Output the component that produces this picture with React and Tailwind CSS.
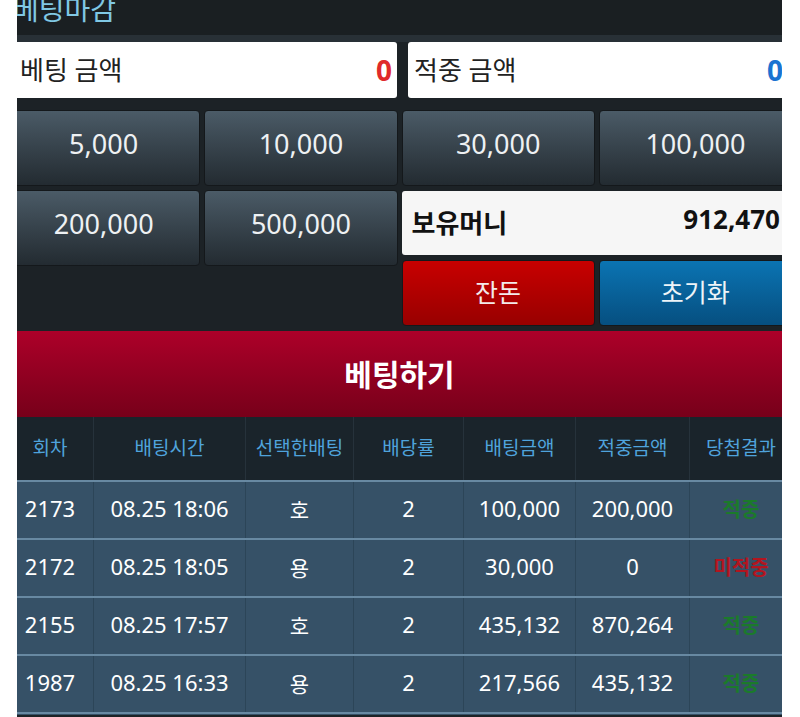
import React from 'react';

const chips = ['5,000', '10,000', '30,000', '100,000'];
const chips2 = ['200,000', '500,000'];

const headers = ['회차', '배팅시간', '선택한배팅', '배당률', '배팅금액', '적중금액', '당첨결과'];

const rows = [
  { round: '2173', time: '08.25 18:06', pick: '호', odds: '2', bet: '100,000', win: '200,000', result: '적중' },
  { round: '2172', time: '08.25 18:05', pick: '용', odds: '2', bet: '30,000', win: '0', result: '미적중' },
  { round: '2155', time: '08.25 17:57', pick: '호', odds: '2', bet: '435,132', win: '870,264', result: '적중' },
  { round: '1987', time: '08.25 16:33', pick: '용', odds: '2', bet: '217,566', win: '435,132', result: '적중' },
];

const font = { fontFamily: '"Noto Sans", "Noto Sans CJK KR", sans-serif' };

const ChipButton = ({ label }) => (
  <button
    type="button"
    className="flex h-[76px] w-full items-center justify-center rounded-[4px] border border-[#14181b] bg-gradient-to-b from-[#4b5b67] to-[#232b31] pb-[7px] text-[27px] text-[#eef1f3]"
  >
    {label}
  </button>
);

const cols = 'grid grid-cols-[86px_152px_108px_110px_112px_114px_103px]';

export default function App() {
  return (
    <div className="min-h-screen bg-white" style={font}>
      <div className="ml-[17px] h-[717px] w-[765px] overflow-hidden bg-[#1c2226]">
        <div className="ml-[-10px] w-[785px]">
          {/* title bar */}
          <div className="h-[35px] overflow-hidden bg-[#1a1f22]">
            <p className="-mt-[5px] pl-[6px] text-[28px] leading-[28px] text-[#80c8e4]">베팅마감</p>
          </div>
          <div className="h-[7px] bg-[#283036]" />

          {/* amount boxes */}
          <div className="flex gap-[11px] pl-[8px]">
            <div className="flex h-[56px] w-[382px] items-center justify-between rounded-[3px] bg-white pl-[5px] pr-[5px]">
              <span className="text-[26px] text-[#222]">베팅 금액</span>
              <span className="text-[28px] font-bold text-[#e02a2a]">0</span>
            </div>
            <div className="flex h-[56px] w-[382px] items-center justify-between rounded-[3px] bg-white pl-[6px] pr-[7px]">
              <span className="text-[26px] text-[#222]">적중 금액</span>
              <span className="text-[28px] font-bold text-[#1a73d1]">0</span>
            </div>
          </div>

          {/* chip buttons */}
          <div className="mt-[12px] grid grid-cols-4 gap-[4px]">
            {chips.map((c) => (
              <ChipButton key={c} label={c} />
            ))}
            {chips2.map((c) => (
              <div key={c} className="self-start">
                <ChipButton label={c} />
              </div>
            ))}
            <div className="col-span-2 flex flex-col gap-[5px]">
              <div className="mt-[1px] flex h-[64px] items-center justify-between rounded-[3px] bg-[#f6f6f6] pl-[10px] pr-[12px]">
                <span className="text-[26px] font-bold text-[#111]">보유머니</span>
                <span className="pb-[8px] text-[26px] font-bold text-[#111]">912,470</span>
              </div>
              <div className="grid h-[66px] grid-cols-2 gap-[4px]">
                <button
                  type="button"
                  className="rounded-[4px] border border-[#14181b] bg-gradient-to-b from-[#c80000] to-[#980000] text-[25px] text-[#f3eaea]"
                >
                  잔돈
                </button>
                <button
                  type="button"
                  className="rounded-[4px] border border-[#14181b] bg-gradient-to-b from-[#0b74b3] to-[#064f80] text-[25px] text-[#eef4f8]"
                >
                  초기화
                </button>
              </div>
            </div>
          </div>

          {/* bet button */}
          <button
            type="button"
            className="mt-[5px] flex h-[86px] w-full items-center justify-center bg-gradient-to-b from-[#ad0029] to-[#77001a] text-[30px] font-bold text-white"
          >
            베팅하기
          </button>

          {/* history table */}
          <div className={`${cols} h-[63px] bg-[#1a242b]`}>
            {headers.map((h, i) => (
              <div
                key={h}
                className={`flex items-center justify-center whitespace-nowrap text-[19px] text-[#4fa3dc] ${i > 0 ? 'border-l border-[#26323b]' : ''}`}
              >
                {h}
              </div>
            ))}
          </div>
          {rows.map((r) => (
            <div key={r.round} className={`${cols} h-[58px] border-t-2 border-[#6889a2] bg-[#365167] text-[22px] text-white`}>
              <div className="flex items-center justify-center pb-[4px]">{r.round}</div>
              <div className="flex items-center justify-center whitespace-nowrap border-l border-[#2c4558] pb-[4px]">{r.time}</div>
              <div className="flex items-center justify-center border-l border-[#2c4558] pt-[2px] text-[21px]">{r.pick}</div>
              <div className="flex items-center justify-center border-l border-[#2c4558] pb-[4px]">{r.odds}</div>
              <div className="flex items-center justify-center border-l border-[#2c4558] pb-[4px]">{r.bet}</div>
              <div className="flex items-center justify-center border-l border-[#2c4558] pb-[4px]">{r.win}</div>
              <div
                className={`flex items-center justify-center border-l border-[#2c4558] text-[20px] font-bold ${
                  r.result === '적중' ? 'text-[#1b7a2b]' : 'text-[#b3151f]'
                }`}
              >
                {r.result}
              </div>
            </div>
          ))}
          <div className="h-[3px] border-t-2 border-[#6889a2] bg-[#365167]" />
        </div>
      </div>
    </div>
  );
}
